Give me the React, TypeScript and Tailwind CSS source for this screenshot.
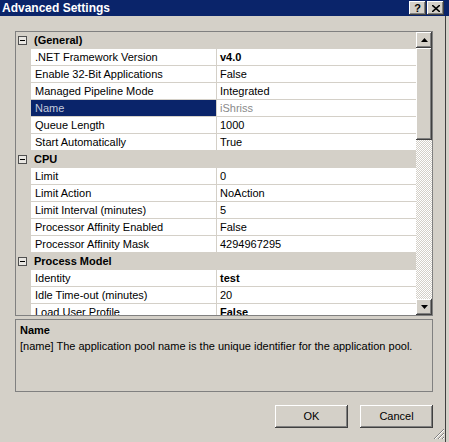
import React from "react";

type Row =
  | { cat: string }
  | { name: string; value: string; bold?: boolean; gray?: boolean; selected?: boolean };

const rows: Row[] = [
  { cat: "(General)" },
  { name: ".NET Framework Version", value: "v4.0", bold: true },
  { name: "Enable 32-Bit Applications", value: "False" },
  { name: "Managed Pipeline Mode", value: "Integrated" },
  { name: "Name", value: "iShriss", gray: true, selected: true },
  { name: "Queue Length", value: "1000" },
  { name: "Start Automatically", value: "True" },
  { cat: "CPU" },
  { name: "Limit", value: "0" },
  { name: "Limit Action", value: "NoAction" },
  { name: "Limit Interval (minutes)", value: "5" },
  { name: "Processor Affinity Enabled", value: "False" },
  { name: "Processor Affinity Mask", value: "4294967295" },
  { cat: "Process Model" },
  { name: "Identity", value: "test", bold: true },
  { name: "Idle Time-out (minutes)", value: "20" },
  { name: "Load User Profile", value: "False", bold: true },
];

// classic win32 raised edge
const raised =
  "bg-[#d4d0c8] shadow-[inset_-1px_-1px_#404040,inset_1px_1px_#ffffff,inset_-2px_-2px_#808080,inset_2px_2px_#d4d0c8]";

function Arrow({ up }: { up?: boolean }) {
  return (
    <svg width="7" height="4" viewBox="0 0 7 4">
      <polygon points={up ? "3.5,0 7,4 0,4" : "0,0 7,0 3.5,4"} fill="#000" />
    </svg>
  );
}

function GridRow({ row }: { row: Row }) {
  if ("cat" in row) {
    return (
      <div className="flex h-[17px] shrink-0 items-center bg-[#d4d0c8]">
        <div className="ml-[2px] flex h-[9px] w-[9px] items-center justify-center border border-[#505050] bg-[#e8e6e2]">
          <div className="h-[1px] w-[5px] bg-black" />
        </div>
        <span className="ml-[7px] font-bold">{row.cat}</span>
      </div>
    );
  }
  return (
    <div className="flex h-[17px] shrink-0 border-b border-[#d4d0c8]">
      <div className="w-[15px] bg-[#d4d0c8]" />
      <div
        className={
          "flex w-[185px] items-center whitespace-nowrap pl-[4px] " +
          (row.selected ? "bg-[#0a246a] text-[#c4cadc]" : "bg-white text-black")
        }
      >
        {row.name}
      </div>
      <div className="w-[1px] bg-[#d4d0c8]" />
      <div
        className={
          "flex flex-1 items-center bg-white pl-[3px] " +
          (row.bold ? "font-bold " : "") +
          (row.gray ? "text-[#8a8a8a]" : "text-black")
        }
      >
        {row.value}
      </div>
    </div>
  );
}

export default function App() {
  return (
    <div className="relative flex h-[442px] w-[449px] flex-col overflow-hidden bg-[#d4d0c8] font-['Liberation_Sans',Arial,sans-serif] text-[11px] text-black">
      {/* title bar */}
      <div className="flex h-[16px] shrink-0 items-center justify-between bg-[#0a246a] pl-[2px] pr-[5px]">
        <span className="text-[12px] font-bold leading-none text-white">Advanced Settings</span>
        <div className="flex gap-[1px]">
          <div className={"flex h-[14px] w-[17px] items-center justify-center text-[11px] font-bold leading-none " + raised}>
            ?
          </div>
          <div className={"flex h-[14px] w-[17px] items-center justify-center " + raised}>
            <svg width="8" height="7" viewBox="0 0 8 7">
              <path d="M0 0L8 7M8 0L0 7" stroke="#000" strokeWidth="1.6" />
            </svg>
          </div>
        </div>
      </div>

      <div className="flex flex-1">
        <div className="flex w-[445px] flex-col pl-[15px]">
          {/* property grid */}
          <div className="mt-[15px] flex h-[285px] w-[418px] border border-[#808080] bg-[#d4d0c8]">
            <div className="flex w-[400px] flex-col overflow-hidden">
              {rows.map((r, i) => (
                <GridRow key={i} row={r} />
              ))}
            </div>
            <div className="flex w-[16px] flex-col">
              <div className={"flex h-[16px] shrink-0 items-center justify-center " + raised}>
                <Arrow up />
              </div>
              <div className={"h-[92px] shrink-0 " + raised} />
              <div className="flex-1 bg-[repeating-conic-gradient(#d4d0c8_0%_25%,#ffffff_0%_50%)] bg-[length:2px_2px]" />
              <div className={"flex h-[16px] shrink-0 items-center justify-center " + raised}>
                <Arrow />
              </div>
            </div>
          </div>

          {/* description */}
          <div className="mt-[3px] h-[73px] w-[418px] border border-[#808080] px-[4px] pt-[2px] leading-[16px]">
            <div className="font-bold">Name</div>
            <div>[name] The application pool name is the unique identifier for the application pool.</div>
          </div>

          {/* buttons */}
          <div className="mt-[13px] flex w-[418px] justify-end gap-[12px]">
            <button className={"h-[23px] w-[73px] " + raised}>OK</button>
            <button className={"h-[23px] w-[73px] " + raised}>Cancel</button>
          </div>
        </div>
        <div className="w-[1px] bg-[#404040]" />
      </div>

      {/* size grip */}
      <svg className="absolute bottom-[2px] right-[4px]" width="12" height="12" viewBox="0 0 12 12">
        <path d="M11 1L1 11M11 5L5 11M11 9L9 11" stroke="#808080" strokeWidth="1" />
        <path d="M11 2L2 11M11 6L6 11M11 10L10 11" stroke="#ffffff" strokeWidth="1" />
      </svg>
    </div>
  );
}
